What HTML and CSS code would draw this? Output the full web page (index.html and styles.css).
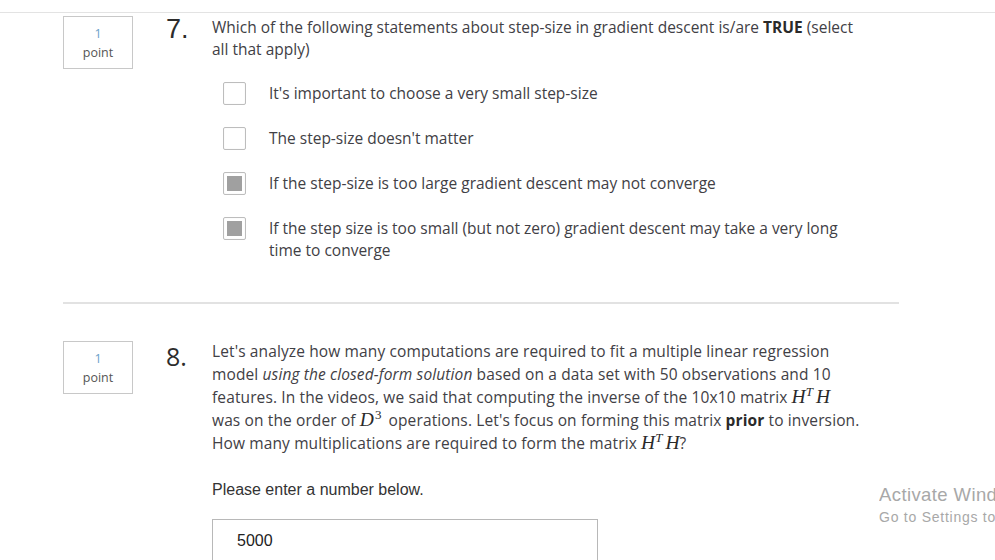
FILE: index.html
```html
<!DOCTYPE html>
<html>
<head>
<meta charset="utf-8">
<link rel="stylesheet" href="styles.css">
</head>
<body>
<div class="topline"></div>
<div class="page">
  <div class="question q7">
    <div class="points"><span class="pn">1</span><span class="pl">point</span></div>
    <div class="num num7">7.</div>
    <div class="body">
      <p class="prompt">Which of the following statements about step-size in gradient descent is/are <b>TRUE</b> (select all that apply)</p>
      <ul class="options">
        <li><span class="cb"></span><span class="opt">It's important to choose a very small step-size</span></li>
        <li><span class="cb"></span><span class="opt">The step-size doesn't matter</span></li>
        <li><span class="cb checked"></span><span class="opt">If the step-size is too large gradient descent may not converge</span></li>
        <li><span class="cb checked"></span><span class="opt">If the step size is too small (but not zero) gradient descent may take a very long time to converge</span></li>
      </ul>
    </div>
  </div>
  <div class="divider"></div>
  <div class="question q8">
    <div class="points"><span class="pn">1</span><span class="pl">point</span></div>
    <div class="num num8">8.</div>
    <div class="body">
      <p class="prompt p8">Let's analyze how many computations are required to fit a multiple linear regression<br>model <i>using the closed-form solution</i> based on a data set with 50 observations and 10<br>features. In the videos, we said that computing the inverse of the 10x10 matrix <span class="m">H<sup>T</sup>H</span><br>was on the order of <span class="m">D<sup class="up">3</sup></span> operations. Let's focus on forming this matrix <b>prior</b> to inversion.<br>How many multiplications are required to form the matrix <span class="m">H<sup>T</sup>H</span>?</p>
      <p class="enter">Please enter a number below.</p>
      <div class="answer">5000</div>
    </div>
  </div>
</div>
<div class="watermark">
  <div class="wm1">Activate Windows</div>
  <div class="wm2">Go to Settings to activate Windows.</div>
</div>
</body>
</html>
```
FILE: styles.css
```css
html, body {
  margin: 0;
  padding: 0;
  background: #fff;
  overflow: hidden;
  width: 995px;
  height: 560px;
}
body {
  font-family: "Open Sans", "Liberation Sans", sans-serif;
  color: #414045;
  position: relative;
}
.topline {
  margin-top: 12px;
  height: 1px;
  background: #e3e3e3;
}
.page {
  padding-left: 63px;
  width: 836px;
}
.question {
  display: flex;
  align-items: flex-start;
}
.q7 { margin-top: 3px; }
.points {
  width: 68px;
  height: 51px;
  border: 1px solid #c8c8c8;
  display: flex;
  flex-direction: column;
  align-items: center;
  justify-content: center;
  font-size: 12.5px;
  line-height: 19px;
  flex: none;
}
.pn { color: #6a9fc9; }
.pl { color: #555; }
.num {
  width: 46px;
  margin-left: 33px;
  flex: none;
  color: #2c2c2c;
}
.num7 {
  font-family: "Liberation Sans", Arial, sans-serif;
  font-size: 27px;
  line-height: 27px;
}
.num8 {
  font-family: "Open Sans", sans-serif;
  font-size: 25px;
  line-height: 27px;
  margin-top: 2px;
}
.body { flex: 1; }
.prompt {
  margin: 0;
  font-size: 15.5px;
  line-height: 22px;
  width: 645px;
}
.prompt b { color: #2a2a2a; }
.options {
  list-style: none;
  margin: 22px 0 0 11px;
  padding: 0;
}
.options li {
  display: flex;
  align-items: flex-start;
  margin-bottom: 22px;
  font-size: 15.5px;
  line-height: 22px;
}
.options li:last-child { margin-bottom: 0; }
.cb {
  width: 21px;
  height: 21px;
  border: 1px solid #bdbdbd;
  border-radius: 2px;
  background: #fff;
  flex: none;
  position: relative;
  box-shadow: inset 0 0 2px rgba(0,0,0,0.05);
}
.cb.checked::after {
  content: "";
  position: absolute;
  left: 3px;
  top: 3px;
  width: 15px;
  height: 15px;
  background: #a0a0a0;
}
.opt {
  margin-left: 23px;
  width: 583px;
}
.divider {
  margin-top: 41px;
  height: 2px;
  background: #e2e2e2;
  width: 836px;
}
.q8 { margin-top: 37px; }
.p8 {
  line-height: 23px;
  letter-spacing: 0.12px;
  width: 680px;
  white-space: nowrap;
  margin-top: -1px;
}
.m {
  font-family: "Liberation Serif", "DejaVu Serif", serif;
  font-style: italic;
  font-size: 19.5px;
  color: #2a2a2a;
  line-height: 0;
  letter-spacing: 0;
}
.m sup {
  font-size: 13px;
  vertical-align: 0;
  position: relative;
  top: -7px;
  margin-right: 3px;
}
.m sup.up { font-style: normal; margin-left: 1px; }
.enter {
  margin: 26px 0 0 0;
  font-family: "Liberation Sans", Arial, sans-serif;
  font-size: 16px;
  color: #333;
  line-height: 18px;
}
.answer {
  margin-top: 20px;
  width: 360px;
  height: 44px;
  border: 1px solid #b8b8b8;
  border-bottom: none;
  padding-left: 24px;
  font-family: "Liberation Sans", Arial, sans-serif;
  font-size: 16px;
  line-height: 42px;
  color: #222;
}
.watermark {
  position: absolute;
  left: 879px;
  right: 0;
  top: 483px;
  white-space: nowrap;
  overflow: hidden;
  color: #a8a8a8;
  font-family: "Liberation Sans", Arial, sans-serif;
}
.wm1 { font-size: 18.5px; letter-spacing: 0.4px; line-height: 23px; }
.wm2 { font-size: 14px; letter-spacing: 0.75px; line-height: 23px; }
```
